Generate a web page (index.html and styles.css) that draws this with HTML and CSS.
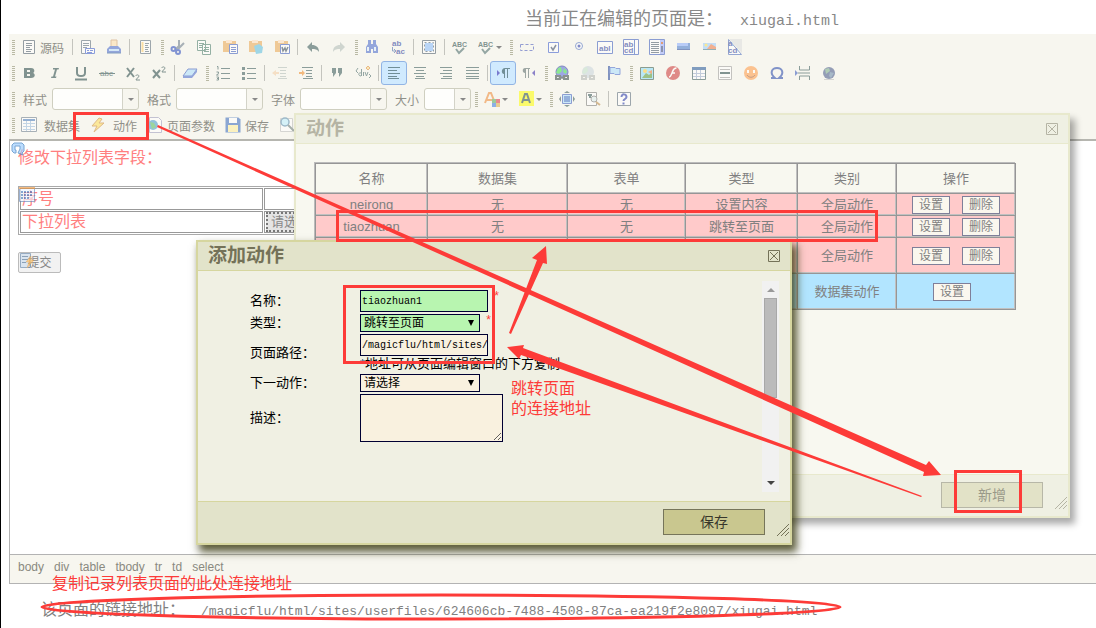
FILE: index.html
```
<!DOCTYPE html>
<html lang="zh-CN">
<head>
<meta charset="utf-8">
<title>xiugai.html</title>
<link rel="stylesheet" href="styles.css">
</head>
<body>
<header class="title">当前正在编辑的页面是：<span class="file">xiugai.html</span></header>
<main class="editor">
<div class="toolbars">
<div class="bar">
<i class="grip"></i>
<button class="tb src"><svg viewBox="0 0 16 16"><path d="M2.500 1.500h11v13h-11z" fill="#fff" stroke="#456"/><path d="M5 4.500h6M5 6.500h6M5 8.500h4M5 10.500h6M5 12.500h5" stroke="#456"/></svg>源码</button>
<i class="sep"></i>
<button class="tb" aria-label="预览"><svg viewBox="0 0 16 16"><path d="M1.500 1.500h9v13h-9z" fill="#fff" stroke="#567"/><path d="M3 4.500h6M3 6.500h6M3 8.500h4" stroke="#567"/><path d="M5.500 9.500h9v5h-9z" fill="#fff" stroke="#35c"/><path d="M7 11.500h2M10 11.500h3M7 13.500h5" stroke="#35c"/></svg></button>
<button class="tb" aria-label="打印"><svg viewBox="0 0 16 16"><path d="M5 1h6v7H5z" fill="#fda" stroke="#c96"/><path d="M4 7h8l3 3v4H1v-4z" fill="#46c"/><path d="M3 10h10v2H3z" fill="#bdf"/><path d="M1 14h14" stroke="#259"/></svg></button>
<i class="sep"></i>
<button class="tb" aria-label="模板"><svg viewBox="0 0 16 16"><path d="M3.500 1.500h10v13h-10z" fill="#fff" stroke="#567"/><path d="M5.500 3v10" stroke="#fc6" stroke-width="2"/><path d="M8 4.500h4M8 6.500h3M8 8.500h4M8 10.500h3M8 12.500h4" stroke="#567"/></svg></button>
<i class="grip"></i>
<button class="tb" aria-label="剪切"><svg viewBox="0 0 16 16" fill="none"><path d="M9 1v6l-4 4M14 4L9 9l-4 1" stroke="#678" stroke-width="2"/><circle cx="3.500" cy="10" r="2" stroke="#24b" stroke-width="2"/><circle cx="8" cy="13" r="2" stroke="#24b" stroke-width="2"/></svg></button>
<button class="tb" aria-label="复制"><svg viewBox="0 0 16 16"><path d="M1.500 1.500h8v10h-8zM6.500 5.500h8v10h-8z" fill="#fff" stroke="#476"/><path d="M3 4.500h5M3 6.500h3M3 8.500h3M8 8.500h5M8 10.500h5M8 12.500h5" stroke="#476"/></svg></button>
<button class="tb" aria-label="粘贴"><svg viewBox="0 0 16 16"><path d="M1 2h13v11H1z" fill="#e9a54e"/><path d="M4 1h6v3H4z" fill="#fdb"/><path d="M7.500 5.500h8v9h-8z" fill="#fff" stroke="#35b"/><path d="M9 8.500h5M9 10.500h5M9 12.500h5" stroke="#35b"/></svg></button>
<button class="tb" aria-label="粘贴为无格式文本"><svg viewBox="0 0 16 16"><path d="M1 2h13v11H1z" fill="#e9a54e"/><path d="M4 1h6v3H4z" fill="#fdb"/><path d="M6 7l5-2 4 3-1 6-6 1z" fill="#58bde0"/></svg></button>
<button class="tb" aria-label="从 MS Word 粘贴"><svg viewBox="0 0 16 16"><path d="M1 2h13v11H1z" fill="#e9a54e"/><path d="M4 1h6v3H4z" fill="#fdb"/><path d="M6.500 5.500h9v9h-9z" fill="#fff" stroke="#35b"/><path d="M8 8l1 4 2-3 1 3 2-4" fill="none" stroke="#345" stroke-width="1.500"/></svg></button>
<i class="sep"></i>
<button class="tb" aria-label="撤消"><svg viewBox="0 0 16 16"><path d="M2 8l5-5v3c4 0 7 2 7 7-2-3-4-3-7-3v3z" fill="#355"/></svg></button>
<button class="tb off" aria-label="重做"><svg viewBox="0 0 16 16"><path d="M14 8L9 3v3c-4 0-7 2-7 7 2-3 4-3 7-3v3z" fill="#355"/></svg></button>
<i class="grip"></i>
<button class="tb" aria-label="查找"><svg viewBox="0 0 16 16"><path d="M4 1h3v4h2V1h3v4l2 3v6H9v-4H7v4H2V8l2-3z" fill="#46c"/><path d="M4 8v4M11 8v4" stroke="#def" stroke-width="2"/></svg></button>
<button class="tb" aria-label="替换"><svg viewBox="0 0 16 16"><text x="2" y="7" class="g b blue">ab</text><text x="6" y="15" class="g b blue">ac</text><path d="M2.500 8v4h3M4 10l2 2-2 2" fill="none" stroke="#46a"/></svg></button>
<i class="sep"></i>
<button class="tb" aria-label="全选"><svg viewBox="0 0 16 16"><path d="M1.500 1.500h13v13h-13z" fill="#fff" stroke="#456"/><path d="M4 4h8v8H4z" fill="#8bf"/><path d="M3.500 3.500h9v9h-9z" fill="none" stroke="#456" stroke-dasharray="2 2"/></svg></button>
<i class="sep"></i>
<button class="tb" aria-label="拼写检查"><svg viewBox="0 0 16 16"><text x="0" y="8" class="g b">ABC</text><path d="M4 10l3 4 5-5" fill="none" stroke="#466" stroke-width="2"/></svg></button>
<button class="tb drop" aria-label="即时拼写检查"><svg viewBox="0 0 16 16"><text x="0" y="8" class="g b">ABC</text><path d="M4 10l3 4 5-5" fill="none" stroke="#466" stroke-width="2"/></svg></button>
<i class="grip"></i>
<button class="tb" aria-label="表单"><svg viewBox="0 0 16 16"><path d="M1.500 5.500h13v6h-13z" fill="none" stroke="#45b" stroke-dasharray="3 2"/></svg></button>
<button class="tb" aria-label="复选框"><svg viewBox="0 0 16 16"><path d="M3.500 3.500h10v10h-10z" fill="#fff" stroke="#35c"/><path d="M6 8l2 3 3-5" fill="none" stroke="#346" stroke-width="1.500"/></svg></button>
<button class="tb" aria-label="单选按钮"><svg viewBox="0 0 16 16"><circle cx="8" cy="7" r="3.500" fill="#fff" stroke="#46b"/><circle cx="8" cy="7" r="1.500" fill="#23a"/></svg></button>
<button class="tb" aria-label="单行文本"><svg viewBox="0 0 16 16"><path d="M.5 2.500h15v12H.5z" fill="#fff" stroke="#35b"/><text x="2" y="12" class="g b blue">abl</text></svg></button>
<button class="tb" aria-label="多行文本"><svg viewBox="0 0 16 16"><path d="M.5.5h15v15H.5z" fill="#fff" stroke="#35b"/><path d="M11.500 1v14" stroke="#35b"/><text x="1" y="8" class="g b blue">ab</text><text x="1" y="14" class="g b blue">cd</text></svg></button>
<button class="tb" aria-label="列表/菜单"><svg viewBox="0 0 16 16"><path d="M.5.5h15v15H.5z" fill="#fff" stroke="#35b"/><path d="M2 3.500h8M2 5.500h8M2 7.500h8M2 9.500h8M2 11.500h8M2 13.500h8" stroke="#456"/><path d="M11 1h4v14h-4z" fill="#9af"/><path d="M12 3h2v2h-2z" fill="#c51"/><path d="M12 7h2v6h-2z" fill="#347"/></svg></button>
<button class="tb" aria-label="按钮"><svg viewBox="0 0 16 16"><path d="M2 4h13v7H2z" fill="#47c"/><path d="M2 4h11v3H2z" fill="#8af"/><path d="M2 10.500h13" stroke="#249"/></svg></button>
<button class="tb" aria-label="图像域"><svg viewBox="0 0 16 16"><path d="M2 4h13v7H2z" fill="#9cf"/><path d="M6 10l4-5 5 3v2z" fill="#e74"/><circle cx="5" cy="6" r="1.500" fill="#fd4"/><path d="M2 10.500h13" stroke="#478"/></svg></button>
<button class="tb" aria-label="隐藏域"><svg viewBox="0 0 16 16"><path d="M1.500.5l13 15h-13z" fill="#fff" stroke="#46b"/><path d="M2 0l13 14V0z" fill="#ddd"/><text x="1" y="14" class="g b blue">cd</text><text x="1" y="7" class="g b blue">a</text></svg></button>
</div>
<div class="bar">
<i class="grip"></i>
<button class="tb" aria-label="加粗"><svg viewBox="0 0 16 16"><path d="M3 3h7c4 0 4 4 2 5 3 1 2 5-2 5H3zM6 5v2h3V5zm0 4v2h3V9z" fill="#244" fill-rule="evenodd"/></svg></button>
<button class="tb" aria-label="倾斜"><svg viewBox="0 0 16 16"><path d="M6 3h6l-.5 1.500H10l-2 7h1.500L9 13H4l.5-1.500H6l2-7H6z" fill="#244"/></svg></button>
<button class="tb" aria-label="下划线"><svg viewBox="0 0 16 16"><path d="M4 2v6c0 4 8 4 8 0V2M2 14.500h12" fill="none" stroke="#244" stroke-width="2"/></svg></button>
<button class="tb" aria-label="删除线"><svg viewBox="0 0 16 16"><text x="1" y="11" class="g s">abc</text><path d="M0 8.500h16" stroke="#244"/></svg></button>
<button class="tb" aria-label="下标"><svg viewBox="0 0 16 16"><path d="M2 3l7 9M9 3l-7 9" stroke="#244" stroke-width="2"/><path d="M11 11c0-2 3-1 3 0s-3 3-3 4h4" fill="none" stroke="#244"/></svg></button>
<button class="tb" aria-label="上标"><svg viewBox="0 0 16 16"><path d="M2 5l7 8M9 5l-7 8" stroke="#244" stroke-width="2"/><path d="M11 3c0-2 3-1 3 0s-3 3-3 4h4" fill="none" stroke="#244"/></svg></button>
<i class="sep"></i>
<button class="tb" aria-label="清除格式"><svg viewBox="0 0 16 16"><path d="M1 11l5-7h9l-5 7z" fill="#adf" stroke="#35b"/><path d="M1 11h9l5-7v3l-5 6H1z" fill="#46c"/></svg></button>
<i class="grip"></i>
<button class="tb" aria-label="编号列表"><svg viewBox="0 0 16 16"><path d="M6 3.500h9M6 8.500h9M6 13.500h9" stroke="#355"/><path d="M2 1.500h1v3M1.500 7h2v1.500l-2 1.500h2M1.500 12h2v3h-2M2 13.500h1.500" fill="none" stroke="#355"/></svg></button>
<button class="tb" aria-label="项目列表"><svg viewBox="0 0 16 16"><path d="M6 3.500h9M6 8.500h9M6 13.500h9" stroke="#355"/><path d="M1 2h3v3H1zM1 7h3v3H1zM1 12h3v3H1z" fill="#355"/></svg></button>
<i class="sep"></i>
<button class="tb off" aria-label="减少缩进量"><svg viewBox="0 0 16 16"><path d="M6 2.500h9M8 5.500h6M8 8.500h6M8 11.500h6M6 13.500h9" stroke="#355"/><path d="M0 8l4-3v2h3v2H4v2z" fill="#e82"/></svg></button>
<button class="tb" aria-label="增加缩进量"><svg viewBox="0 0 16 16"><path d="M4 2.500h11M8 5.500h6M8 8.500h6M8 11.500h6M5 13.500h10" stroke="#355"/><path d="M7 8L4 5v2H1v2h3v2z" fill="#e82"/></svg></button>
<i class="sep"></i>
<button class="tb" aria-label="块引用"><svg viewBox="0 0 16 16"><path d="M3 3h4v5l-3 4V8H3zM9 3h4v5l-3 4V8H9z" fill="#355"/></svg></button>
<button class="tb" aria-label="创建 DIV 容器"><svg viewBox="0 0 16 16"><path d="M3 3L1 6l2 2M6.500 4v7M6 8c-3-1-3 3 0 3M8.500 7v4M10 7l1.500 4L13 7M14 13l2-2-2-2" fill="none" stroke="#466"/><path d="M13 1l2 2-2 2-2-2z" fill="#fd8" stroke="#d83"/></svg></button>
<i class="sep"></i>
<button class="tb on" aria-label="左对齐"><svg viewBox="0 0 16 16"><path d="M2 2.500h12M2 5.500h9M2 8.500h12M2 11.500h9M2 13.500h11" stroke="#244"/></svg></button>
<button class="tb" aria-label="居中"><svg viewBox="0 0 16 16"><path d="M2 2.500h12M4 5.500h8M2 8.500h12M4 11.500h8M3 13.500h10" stroke="#355"/></svg></button>
<button class="tb" aria-label="右对齐"><svg viewBox="0 0 16 16"><path d="M2 2.500h12M5 5.500h9M2 8.500h12M5 11.500h9M3 13.500h11" stroke="#355"/></svg></button>
<button class="tb" aria-label="两端对齐"><svg viewBox="0 0 16 16"><path d="M2 2.500h13M2 5.500h13M2 8.500h13M2 11.500h13M2 13.500h13" stroke="#355"/></svg></button>
<i class="sep"></i>
<button class="tb on" aria-label="从左到右"><svg viewBox="0 0 16 16"><path d="M2 5l3 3-3 3z" fill="#32a"/><path d="M15 3h-5C6 3 6 9 9 9v4h1V4h2v9h1V4h2z" fill="#244"/></svg></button>
<button class="tb" aria-label="从右到左"><svg viewBox="0 0 16 16"><path d="M14 5l-3 3 3 3z" fill="#32a"/><path d="M9 3H4C1 3 1 8 4 8v5h1V4h2v9h1V4h1z" fill="#566"/></svg></button>
<i class="grip"></i>
<button class="tb" aria-label="超链接"><svg viewBox="0 0 16 16"><circle cx="8" cy="7" r="6" fill="#56d" stroke="#239"/><path d="M4 3l3-1 1 4-3 3-3-1zM10 3l3 3-1 3-3-2z" fill="#3d4"/><path d="M2 11h4v3H2zM10 11h4v3h-4zM6 12.500h4" fill="none" stroke="#344" stroke-width="2"/></svg></button>
<button class="tb off" aria-label="取消超链接"><svg viewBox="0 0 16 16"><circle cx="8" cy="7" r="6" fill="#79b"/><path d="M4 3l3-1 1 4-3 3-3-1z" fill="#6b8"/><path d="M2 11h4v3H2zM10 11h4v3h-4z" fill="none" stroke="#344" stroke-width="2"/></svg></button>
<button class="tb" aria-label="锚点链接"><svg viewBox="0 0 16 16"><path d="M3 1v14" stroke="#249" stroke-width="2"/><path d="M4 2.500h5l1 1h4v6h-5l-1-1H4z" fill="#adf" stroke="#46c"/></svg></button>
<i class="grip"></i>
<button class="tb" aria-label="图像"><svg viewBox="0 0 16 16"><path d="M1.500 2.500h13v12h-13z" fill="#8df" stroke="#354"/><path d="M3 13l4-5 3 2 3-3v6z" fill="#593"/><circle cx="6" cy="6" r="2" fill="#fc3"/><path d="M9 7l4-2v4z" fill="#e73"/></svg></button>
<button class="tb" aria-label="Flash"><svg viewBox="0 0 16 16"><circle cx="8" cy="8" r="7" fill="#c33"/><path d="M11.500 3C8 3 8 6 7 8s-1 4-3 4M7 8h3" fill="none" stroke="#fff" stroke-width="1.500"/></svg></button>
<button class="tb" aria-label="表格"><svg viewBox="0 0 16 16"><path d="M1.500 2.500h13v12h-13z" fill="#fff" stroke="#355"/><path d="M1 3.500h14" stroke="#259" stroke-width="3"/><path d="M2 8.500h12M2 11.500h12M5.500 5v9M9.500 5v9" stroke="#9ac"/></svg></button>
<button class="tb" aria-label="水平线"><svg viewBox="0 0 16 16"><path d="M1.500 1.500h13v13h-13z" fill="#fff" stroke="#999"/><path d="M3 4.500h10M3 12.500h10" stroke="#999"/><path d="M3 8h10" stroke="#244" stroke-width="2"/></svg></button>
<button class="tb" aria-label="表情符"><svg viewBox="0 0 16 16"><circle cx="8" cy="8" r="7" fill="#f94"/><path d="M5 5v3M11 5v3" stroke="#fff" stroke-width="2"/><path d="M4 10c2 3 6 3 8 0" fill="none" stroke="#953"/></svg></button>
<button class="tb" aria-label="特殊符号"><svg viewBox="0 0 16 16"><path d="M2 13h4c-6-5-3-10 2-10s8 5 2 10h4" fill="none" stroke="#24a" stroke-width="2"/></svg></button>
<button class="tb" aria-label="分页符"><svg viewBox="0 0 16 16"><path d="M4.500 1v4h10V1M4.500 15v-4h10v4M3 8h12" fill="none" stroke="#355"/><path d="M0 5l3 3-3 3z" fill="#35b"/></svg></button>
<button class="tb" aria-label="IFrame"><svg viewBox="0 0 16 16"><circle cx="8" cy="8" r="6" fill="#458"/><path d="M4 4l4-1 1 3-4 3z" fill="#7a8"/><path d="M9 7l4 1-3 5-2-2z" fill="#68a"/><path d="M3 14.500h10" stroke="#bbb"/></svg></button>
</div>
<div class="bar">
<i class="grip"></i>
<label class="combo">样式<span class="pick"><select><option></option></select></span></label>
<label class="combo">格式<span class="pick"><select><option></option></select></span></label>
<label class="combo">字体<span class="pick"><select><option></option></select></span></label>
<label class="combo">大小<span class="pick small"><select><option></option></select></span></label>
<i class="grip"></i>
<button class="tb drop" aria-label="文本颜色"><svg viewBox="0 0 16 16"><path d="M1 12L5 2h2l4 10M3 9h6" fill="none" stroke="#e83" stroke-width="2"/><path d="M8 8h4v4H8z" fill="#5a5"/><path d="M12 8h4v4h-4z" fill="#d34"/><path d="M8 12h4v4H8z" fill="#37d"/><path d="M12 12h4v4h-4z" fill="#da4"/></svg></button>
<button class="tb drop" aria-label="背景颜色"><svg viewBox="0 0 16 16"><path d="M1 0h15v15H1z" fill="#ff0"/><path d="M4 12l3-9h2l3 9M5 9h6" fill="none" stroke="#244" stroke-width="2"/></svg></button>
<i class="grip"></i>
<button class="tb" aria-label="全屏"><svg viewBox="0 0 16 16"><path d="M3.500 3.500h9v9h-9z" fill="#adf" stroke="#35b"/><path d="M5 5h6v6H5z" fill="#47c"/><path d="M8 0l3 2H5zM8 16l3-2H5zM0 8l2-3v6zM16 8l-2-3v6z" fill="#355"/></svg></button>
<button class="tb" aria-label="显示区块"><svg viewBox="0 0 16 16"><path d="M1.500 1.500h10v13h-10z" fill="#fff" stroke="#777"/><path d="M3 4h4M5 3v4" stroke="#355" stroke-width="2"/><circle cx="9" cy="8" r="3" fill="#dee" stroke="#777"/><path d="M11 11l4 3" stroke="#b84" stroke-width="2"/></svg></button>
<i class="sep"></i>
<button class="tb" aria-label="关于"><svg viewBox="0 0 16 16"><path d="M1.500 1.500h13v13h-13z" fill="#fff" stroke="#567"/><path d="M5.500 6c0-4 5-3 5 0 0 2-3 2-3 4M7.500 11.500v2" fill="none" stroke="#23a" stroke-width="2"/></svg></button>
</div>
<div class="bar">
<i class="grip"></i>
<button class="tb wide"><svg viewBox="0 0 16 16"><path d="M.5.500h15v14H.5z" fill="#fff" stroke="#678"/><path d="M2 3h12" stroke="#47b" stroke-width="2"/><path d="M2 6.500h12M2 9.500h12M2 12.500h12M5.500 4v10M9.500 4v10" stroke="#9bd"/></svg>数据集</button>
<button class="tb wide"><svg viewBox="0 0 16 16"><path d="M9 1L2 9h5l-3 6 10-9H9l3-4z" fill="#fd5" stroke="#c83"/></svg>动作</button>
<button class="tb near"><svg viewBox="0 0 16 16"><path d="M2.500.5h9l3 3v12h-12z" fill="#fff" stroke="#99b"/><circle cx="6" cy="8" r="5" fill="#49c"/><path d="M3 5l4 1 2 4-4 2z" fill="#5b5"/></svg>页面参数</button>
<button class="tb near"><svg viewBox="0 0 16 16"><path d="M.5.500h13l2 2v13H.5z" fill="#36b"/><path d="M4 1h8v5H4z" fill="#fff"/><path d="M3 8h10v7H3z" fill="#fe9"/></svg>保存</button>
<button class="tb near" aria-label="查看"><svg viewBox="0 0 16 16"><path d="M1.500 1.500h12v13h-12z" fill="#fff" stroke="#bbb"/><circle cx="6" cy="5" r="4" fill="#bef" stroke="#58a" stroke-width="1.500"/><path d="M9 8l6 6" stroke="#677" stroke-width="2"/></svg></button>
</div>
</div>
<section class="page">
<svg class="mark" viewBox="0 0 16 16"><path d="M6 12H4l-2-2V4l2-2h8l2 2v6l-2 2 1 2-5-2 2-4V5H5v4h1z" fill="#9cf" stroke="#37b"/></svg>
<p>修改下拉列表字段：</p>
<table class="fields">
<colgroup><col class="key"><col></colgroup>
<tr><td>序号<svg class="mark" viewBox="0 0 16 16"><path d="M.5.500h15v14H.5z" fill="#eff5ff" stroke="#68b"/><path d="M0 1h16" stroke="#e94" stroke-width="2"/><path d="M2 5h12M2 8h12M2 11h9" stroke="#47b" stroke-width="2" stroke-dasharray="2 1"/></svg></td><td></td></tr>
<tr><td>下拉列表</td><td><span class="ghost">请选择</span></td></tr>
</table>
<button class="submit">提交<svg class="mark" viewBox="0 0 16 16"><path d="M1.500.500h10v14h-10z" fill="#cde" stroke="#68a"/><path d="M3 3.500h6M3 6.500h6M3 9.500h4" stroke="#579"/><path d="M12 3L7 9h3l-2 6 7-8h-3z" fill="#fb5" stroke="#c83" stroke-width=".5"/></svg></button>
</section>
<nav class="path"><a href="#">body</a><a href="#">div</a><a href="#">table</a><a href="#">tbody</a><a href="#">tr</a><a href="#">td</a><a href="#">select</a></nav>
</main>
<footer class="link">该页面的链接地址：<span class="url">/magicflu/html/sites/userfiles/624606cb-7488-4508-87ca-ea219f2e8097/xiugai.html</span></footer>

<section class="dialog list">
<header class="head"><h2>动作</h2><button class="close" aria-label="关闭"><svg viewBox="0 0 12 12"><path d="M.5.500h11v11H.5zM2 2l8 8M10 2l-8 8" fill="none" stroke="currentColor"/></svg></button></header>
<div class="body">
<table class="actions">
<colgroup><col class="c1"><col class="c2"><col class="c3"><col class="c4"><col class="c5"><col class="c6"></colgroup>
<tr class="top"><th>名称</th><th>数据集</th><th>表单</th><th>类型</th><th>类别</th><th>操作</th></tr>
<tr class="pink"><td>neirong</td><td>无</td><td>无</td><td>设置内容</td><td>全局动作</td><td><button>设置</button><button>删除</button></td></tr>
<tr class="pink"><td>tiaozhuan</td><td>无</td><td>无</td><td>跳转至页面</td><td>全局动作</td><td><button>设置</button><button>删除</button></td></tr>
<tr class="pink tall"><td></td><td></td><td></td><td></td><td>全局动作</td><td><button>设置</button><button>删除</button></td></tr>
<tr class="blue tall"><td></td><td></td><td></td><td></td><td>数据集动作</td><td class="one"><button>设置</button></td></tr>
</table>
</div>
<footer class="foot"><button class="main">新增</button><svg class="size" viewBox="0 0 12 12"><path d="M0 12L12 0M4 12l8-8M8 12l4-4" stroke="currentColor"/></svg></footer>
</section>

<section class="dialog add">
<header class="head"><h2>添加动作</h2><button class="close" aria-label="关闭"><svg viewBox="0 0 12 12"><path d="M.5.500h11v11H.5zM2 2l8 8M10 2l-8 8" fill="none" stroke="currentColor"/></svg></button></header>
<div class="body">
<form class="form">
<label for="name">名称：</label><div class="cell"><input id="name" class="ok" value="tiaozhuan1"><b>*</b></div>
<label for="type">类型：</label><div class="cell"><span class="drop-down"><select id="type" class="ok"><option>跳转至页面</option></select></span><b>*</b></div>
<label for="url">页面路径：</label><div><input id="url" value="/magicflu/html/sites/"><p class="hint"><i>*</i>地址可从页面编辑窗口的下方复制</p></div>
<label for="next">下一动作：</label><div class="cell"><span class="drop-down"><select id="next"><option>请选择</option></select></span></div>
<label for="desc">描述：</label><textarea id="desc"></textarea>
</form>
<div class="scroll"><i class="up"></i><i class="thumb"></i><i class="down"></i></div>
</div>
<footer class="foot"><button class="main">保存</button><svg class="size" viewBox="0 0 12 12"><path d="M0 12L12 0M4 12l8-8M8 12l4-4" stroke="currentColor"/></svg></footer>
</section>

<svg class="marks" width="1096" height="628" viewBox="0 0 1096 628">
<g fill="none" stroke="#fd3b38" stroke-width="3"><path d="M74.500 113.500h73v25h-73zM337.500 211.500h539v29h-539zM344.500 286.500h149v76h-149zM955.500 471.500h65v40h-65z"/><ellipse cx="441" cy="607" rx="399" ry="12"/></g>
<g fill="#fd3b38"><path d="M158 125L926 465l3-4 12 14-18 1 1-4L157 127z"/><path d="M922 496L523 348l1-3-17 2 12 12 2-4 400 142z"/><path d="M509 333l28-73-5-2 14-12 1 18-4-1-32 71z"/></g>
</svg>
<p class="note jump">跳转页面<br>的连接地址</p>
<p class="note copy">复制记录列表页面的此处连接地址</p>
</body>
</html>
```
FILE: styles.css
```
* { box-sizing: border-box; }
body {
  position: relative;
  margin: 0;
  min-height: 100vh;
  padding-left: 8px;
  border-left: 1px solid #000;
  overflow: hidden;
  background: #fff;
  color: #808080;
  font: 12px "Liberation Sans", "Noto Sans CJK SC", sans-serif;
}
button, input, select, textarea { font: inherit; color: inherit; margin: 0; }
p, h2 { margin: 0; }
.title { height: 34px; line-height: 38px; padding-left: 516px; font-size: 18px; color: #888; white-space: nowrap; }
.file { margin-left: 17px; font: 15px "Liberation Mono", monospace; }

.toolbars { background: #f7f6ef; border-bottom: 2px solid #b6b6b0; padding-bottom: 1px; color: #909089; }
.bar { display: flex; height: 26px; align-items: center; white-space: nowrap; }
.grip { flex: none; width: 3px; height: 15px; margin: 0 1px 0 3px; background: repeating-linear-gradient(#b9b9a4 0 1px, transparent 1px 2px); }
.sep { flex: none; width: 1px; height: 16px; margin: 0 2px; background: #c4c4be; }
.tb { flex: none; display: flex; align-items: center; gap: 3px; height: 24px; padding: 0 4px; border: 1px solid transparent; border-radius: 3px; background: none; }
.tb svg { width: 16px; height: 16px; opacity: .55; }
.tb.src { padding-right: 5px; }
.tb.off svg { opacity: .2; }
.tb.on { background: #d0eafe; border-color: #92b4e4; }
.tb.drop::after { content: ""; border: 3px solid transparent; border-top-color: #888; border-bottom: 0; margin-left: -1px; }
.tb.wide { gap: 7px; }
.tb.wide + .tb.wide { padding-left: 4px; }
.tb.near { padding: 0 4px; gap: 4px; }
.g { font: 7px "Liberation Sans", sans-serif; fill: #244; }
.g.b { font-weight: bold; }
.g.s { font-size: 8px; }
.g.blue { font-size: 8px; fill: #239; }
.combo { display: flex; align-items: center; gap: 5px; margin-left: 7px; }
.combo + .combo { margin-left: 8px; }
.combo + .grip { margin-left: 4px; }
.pick { position: relative; width: 87px; }
.pick.small { width: 47px; }
.pick select { display: block; appearance: none; width: 100%; height: 22px; border: 1px solid #cfcfc0; border-radius: 3px; background: linear-gradient(to left, #f7f6ef 15px, #d3d3c8 15px 16px, #fefefc 16px); }
.pick::after { content: ""; position: absolute; right: 5px; top: 10px; border: 3px solid transparent; border-top-color: #888; border-bottom: 0; }

.page { position: relative; height: 413px; padding: 7px 8px; border-left: 1px solid #b3b3b3; color: #ff7f7f; font-size: 16px; line-height: 20px; }
.mark { position: absolute; left: 0; top: 0; width: 16px; height: 16px; opacity: .65; }
.fields { width: 498px; margin: 18px 0 17px; border: 1px solid #aaa; border-spacing: 1px; table-layout: fixed; }
.fields .key { width: 243px; }
.fields td { position: relative; height: 22px; padding: 0 0 0 1px; border: 1px solid #999; }
.fields .mark { left: -2px; top: -2px; }
.ghost { display: inline-block; padding: 0 3px; border: 2px dotted #777; background: #e4e4e4; color: #888; font-size: 13px; line-height: 16px; vertical-align: top; }
.submit { position: relative; width: 43px; height: 21px; padding: 0; border: 1px solid #bbb; border-radius: 2px; background: #f2f2f2; color: #888; font-size: 12px; }
.path { display: flex; gap: 10px; height: 30px; padding: 5px 8px; border: solid #b3b3b3; border-width: 1px 0 1px 1px; background: #f7f6ef; }
.path a { color: #898980; text-decoration: none; }
.link { padding: 14px 0 0 32px; font-size: 16px; line-height: 24px; white-space: nowrap; }
.url { margin-left: 16px; font: 13px "Liberation Mono", monospace; }

.dialog { position: absolute; display: flex; flex-direction: column; border: 2px solid #d6d69f; color: #000; font-size: 13px; }
.head { display: flex; align-items: center; justify-content: space-between; height: 29px; padding: 0 10px; border-bottom: 1px solid #d6d69f; background: #e2e3ca; color: #747258; }
.head h2 { font-size: 19px; line-height: 26px; font-weight: bold; }
.close { padding: 0; border: 0; background: none; line-height: 0; }
.close svg { width: 12px; height: 12px; }
.body { display: flex; flex: 1; background: #f0f0e3; }
.foot { position: relative; display: flex; justify-content: flex-end; height: 42px; padding: 7px 25px 0; border-top: 1px solid #d6d69f; background: #e2e3ca; color: #747258; }
.main { width: 102px; height: 26px; padding: 0 0 2px; border: 1px solid #76755a; background: #c9c78f; color: #38372c; font-size: 14px; }
.size { position: absolute; right: 1px; bottom: 7px; width: 12px; height: 12px; }

.list { left: 293px; top: 113px; width: 776px; height: 405px; border-color: #e8e9cd; box-shadow: 5px 6px 7px #0005; }
.list .head, .list .foot { border-color: #e8e9cd; background: #eff0e3; color: #b5b4a4; }
.list .body { padding: 19px; background: #f8f8f0; align-items: flex-start; }
.list .main { border-color: #b7b7a7; background: #e2e2c7; color: #999989; }
.actions { width: 700px; table-layout: fixed; border-collapse: collapse; color: #808080; text-align: center; box-shadow: -1px -1px #bbb; }
.actions th, .actions td { padding: 0; border: 1px solid #969696; box-shadow: inset -1px -1px #c0c0c0; font-weight: normal; line-height: 18px; }
.c1 { width: 112px; } .c2 { width: 140px; } .c3 { width: 118px; } .c4 { width: 112px; } .c5 { width: 99px; } .c6 { width: 119px; }
.top { height: 30px; }
.pink { height: 22px; background: #ffcaca; }
.blue { background: #b2e5ff; }
.actions .tall { height: 36px; }
.actions .one { padding-right: 8px; }
.actions button { width: 38px; height: 18px; padding: 0; border: 1px solid #7f7f99; background: #faf7ee; font-size: 12px; line-height: 14px; vertical-align: middle; }
.actions button + button { margin-left: 12px; }

.add { left: 195px; top: 240px; width: 596px; height: 305px; box-shadow: 4px 6px 8px 1px #3a3a10d0; }
.form { flex: 1; display: grid; grid-template-columns: 110px 1fr; grid-template-rows: 22px 18px 38px 18px 48px; gap: 2px 0; align-items: center; padding: 19px 0 0 52px; line-height: 16px; }
.cell { display: flex; gap: 5px; align-items: flex-start; }
.cell b { color: #fd3b38; font: 12px "Liberation Mono", monospace; }
.form input, .form select, .form textarea { display: block; border: 1px solid #003; border-radius: 0; background: #f9f1df; }
.form input { width: 128px; height: 22px; padding: 0 0 0 1px; font: 10px "Liberation Mono", monospace; }
.form select { appearance: none; width: 120px; height: 18px; padding: 0 3px; font-size: 12px; line-height: 14px; }
.form textarea { width: 143px; height: 48px; }
.form .ok { background: #b8f5b0; }
.drop-down { position: relative; }
.drop-down::after { content: ""; position: absolute; right: 6px; top: 6px; border: 3px solid transparent; border-top: 6px solid #000; border-bottom: 0; }
.hint { white-space: nowrap; }
.hint i { color: #247; font-style: normal; }
.scroll { display: flex; flex-direction: column; align-items: center; width: 17px; margin: 10px 11px 9px 0; padding: 7px 0; background: #f1f1f1; }
.up { border: 4px solid transparent; border-top: 0; border-bottom-color: #999; }
.thumb { width: 13px; height: 100px; margin-top: 6px; border: 1px solid #a8a8a8; background: #bbb; }
.down { margin-top: auto; border: 4px solid transparent; border-bottom: 0; border-top-color: #444; }

.marks { position: absolute; left: -1px; top: 0; pointer-events: none; }
.note { position: absolute; color: #fd3b38; font-size: 16px; line-height: 20px; white-space: nowrap; pointer-events: none; }
.jump { left: 510px; top: 379px; }
.copy { left: 51px; top: 574px; }
```
